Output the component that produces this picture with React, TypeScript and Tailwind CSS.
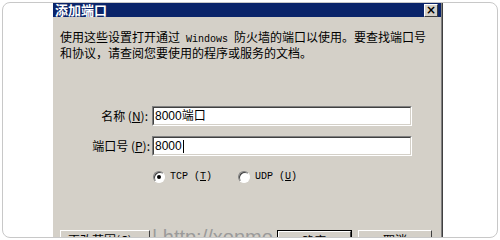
import React from "react";

const cjk = { fontFamily: '"Noto Sans CJK SC", "Liberation Sans", sans-serif' };
const mono = { fontFamily: '"Liberation Mono", monospace' };

function Btn({ children, def }: { children: React.ReactNode; def?: boolean }) {
  return (
    <div className={def ? "border border-black" : ""}>
      <div className="h-[23px] border-t border-l border-white border-r border-b border-r-[#404040] border-b-[#404040] bg-[#d4d0c8] flex justify-center pt-[2px] text-[12px] leading-[14px] text-black">
        {children}
      </div>
    </div>
  );
}

function Radio({ checked }: { checked?: boolean }) {
  return (
    <div className="w-[12px] h-[12px] rounded-full border border-t-[#808080] border-l-[#808080] border-r-white border-b-white bg-white flex items-center justify-center shadow-[inset_1px_1px_0_#404040]">
      {checked && <div className="w-[4px] h-[4px] rounded-full bg-black" />}
    </div>
  );
}

function Field({ value, caret }: { value: string; caret?: boolean }) {
  return (
    <div className="w-[260px] h-[20px] border border-t-[#808080] border-l-[#808080] border-r-white border-b-white">
      <div className="h-full border border-t-[#404040] border-l-[#404040] border-r-[#d4d0c8] border-b-[#d4d0c8] bg-white flex items-center pl-[1px] text-[12px] text-black" style={{ fontFamily: '"Liberation Sans", "Noto Sans CJK SC", sans-serif' }}>
        <span>{value}</span>
        {caret && <span className="inline-block w-[1px] h-[13px] bg-black ml-[1px]" />}
      </div>
    </div>
  );
}

export default function App() {
  return (
    <div className="w-[500px] h-[240px] bg-white pt-[2px] pl-[2px]" style={cjk}>
      <div className="relative w-[496px] h-[236px] border border-[#c8c8c8] rounded-[8px] overflow-hidden bg-white pl-[50px]">
        <div className="w-[390px] h-[260px] border-r border-[#404040]">
          <div className="h-full border-r border-[#808080] bg-[#d4d0c8] flex flex-col">
            {/* title bar */}
            <div className="h-[14px] bg-[#0a246a] flex items-center justify-between pl-[2px] pr-[3px]">
              <span className="text-white font-bold text-[13px] leading-[14px]">添加端口</span>
              <div className="w-[14px] h-[13px] bg-[#d4d0c8] border border-t-white border-l-white border-r-[#404040] border-b-[#404040] flex items-center justify-center text-[12px] leading-[10px] font-bold text-black" style={{ fontFamily: '"DejaVu Sans", sans-serif' }}>
                ×
              </div>
            </div>
            {/* description */}
            <div className="pt-[13px] pl-[7px] text-[12px] leading-[13px] text-black">
              <div className="whitespace-nowrap">
                使用这些设置打开通过<span style={mono} className="text-[10px]"> Windows </span>防火墙的端口以使用。要查找端口号
              </div>
              <div className="whitespace-nowrap">和协议，请查阅您要使用的程序或服务的文档。</div>
            </div>
            {/* fields */}
            <div className="mt-[47px] grid grid-cols-[99px_260px] gap-y-[10px] items-center text-[12px] text-black">
              <div className="text-right pr-[4px] whitespace-nowrap">
                名称 (<span className="underline">N</span>):
              </div>
              <Field value="8000端口" />
              <div className="text-right pr-[2px] whitespace-nowrap">
                端口号 (<span className="underline">P</span>):
              </div>
              <Field value="8000" caret />
            </div>
            {/* radios */}
            <div className="mt-[14px] h-[13px] flex items-center pl-[100px] text-[10px] text-black">
              <Radio checked />
              <span className="ml-[5px] w-[68px]" style={mono}>
                TCP (<span className="underline">T</span>)
              </span>
              <Radio />
              <span className="ml-[5px]" style={mono}>
                UDP (<span className="underline">U</span>)
              </span>
            </div>
            {/* buttons */}
            <div className="mt-[47px] flex pl-[7px]">
              <div className="w-[90px]">
                <Btn>更改范围(C)...</Btn>
              </div>
              <div className="w-[75px] ml-[127px]">
                <Btn def>确定</Btn>
              </div>
              <div className="w-[74px] ml-[6px]">
                <Btn>取消</Btn>
              </div>
            </div>
          </div>
        </div>
        <div className="absolute left-[149px] top-[222px] text-[20px] leading-[24px] text-[#9a9a9a] whitespace-nowrap" style={{ fontFamily: '"Liberation Sans", sans-serif' }}>
          | http://xonmo
        </div>
      </div>
    </div>
  );
}
